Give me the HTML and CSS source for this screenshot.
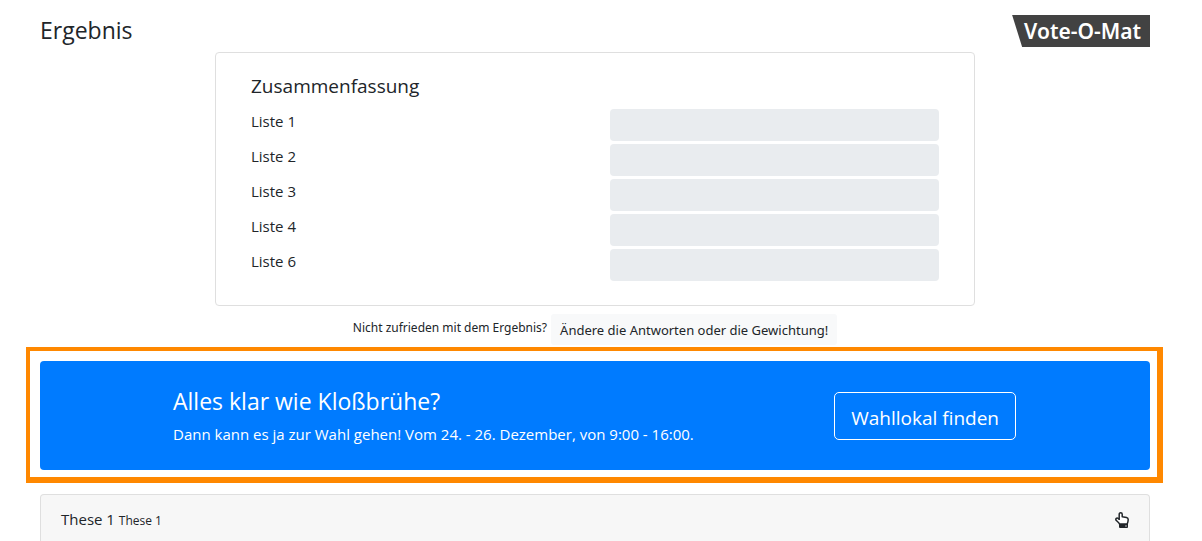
FILE: index.html
```html
<!DOCTYPE html>
<html lang="de">
<head>
<meta charset="utf-8">
<title>Vote-O-Mat – Ergebnis</title>
<meta name="viewport" content="width=device-width, initial-scale=1">
<link rel="stylesheet" href="styles.css">
</head>
<body>
<div class="container">
  <header class="header">
    <h1 class="page-title">Ergebnis</h1>
    <a class="logo" href="#">Vote-O-Mat</a>
  </header>
  <section class="summary">
    <h2 class="summary-title">Zusammenfassung</h2>
    <ul class="lists">
      <li class="row"><span class="name">Liste 1</span><span class="bar"></span></li>
      <li class="row"><span class="name">Liste 2</span><span class="bar"></span></li>
      <li class="row"><span class="name">Liste 3</span><span class="bar"></span></li>
      <li class="row"><span class="name">Liste 4</span><span class="bar"></span></li>
      <li class="row"><span class="name">Liste 6</span><span class="bar"></span></li>
    </ul>
  </section>
  <p class="retry"><small>Nicht zufrieden mit dem Ergebnis?</small><button class="retry-button" type="button">Ändere die Antworten oder die Gewichtung!</button></p>
  <div class="highlight">
    <section class="banner">
      <div class="banner-text">
        <h2 class="banner-title">Alles klar wie Kloßbrühe?</h2>
        <p class="banner-copy">Dann kann es ja zur Wahl gehen! Vom 24. - 26. Dezember, von 9:00 - 16:00.</p>
      </div>
      <a class="banner-button" href="#">Wahllokal finden</a>
    </section>
  </div>
  <section class="thesis">
    <span class="thesis-title">These 1 <small>These 1</small></span>
    <button class="hand" type="button" aria-label="These 1 öffnen">
      <svg viewBox="0 0 14 16" width="14" height="16"><path d="M4.200 8V2.200C4.200.3 7.200.3 7.200 2.200V4.800L11.500 5.500Q13.300 6 13.200 7.800Q13.100 9.800 12.200 12H4.500C4 10.500 2.300 9.600 1.100 8.300C.2 6.800 1.800 5.400 3.200 6.500L4.200 7.500" fill="#fff" stroke="#212529" stroke-width="1.500" stroke-linejoin="round"/><path d="M4 12h9v3q0 1-1 1H5q-1 0-1-1z" fill="#212529"/><circle cx="11" cy="14" r=".7" fill="#f7f7f7"/></svg>
    </button>
  </section>
</div>
</body>
</html>
```
FILE: styles.css
```css
* { box-sizing: border-box; }
body {
  margin: 0;
  padding-right: 12px;
  font-family: "Open Sans", "Noto Sans", sans-serif;
  font-size: 15px;
  line-height: 24px;
  color: #212529;
  background: #fff;
}
h1, h2, p, ul { margin: 0; padding: 0; font-weight: 400; }
.container { max-width: 1140px; margin: 0 auto; padding: 15px 15px 0; }
.header { display: flex; justify-content: space-between; height: 37px; }
.page-title { font-size: 23px; line-height: 31px; }
.logo {
  height: 32px;
  padding: 0 9px 0 12px;
  font: 600 21px/32px "Noto Sans", sans-serif;
  color: #fff;
  text-decoration: none;
  background: #424242;
  clip-path: polygon(0 0, 100% 0, 100% 100%, 10px 100%);
}
.summary {
  max-width: 760px;
  margin: 0 auto;
  padding: 21px 35px 24px;
  border: 1px solid #dfdfdf;
  border-radius: 4px;
}
.summary-title { font-size: 19px; line-height: 24px; margin-bottom: 11px; }
.lists { display: grid; gap: 3px; list-style: none; }
.row { display: grid; grid-template-columns: 1fr 1fr; column-gap: 30px; }
.bar { height: 32px; border-radius: 4px; background: #e9ecef; }
.retry { display: flex; justify-content: center; align-items: flex-start; gap: 4px; margin-top: 8px; }
.retry small { font: 12px/28px "Noto Sans", sans-serif; }
.retry-button {
  padding: 4px 9px 3px;
  border: 0;
  border-radius: 3px;
  font: 13px/24px "Noto Sans", sans-serif;
  color: #212529;
  background: #f8f9fa;
}
.highlight {
  margin: 2px -13px 0 -14px;
  padding: 10px 7px 7px 10px;
  border: solid #ff8800;
  border-width: 4px 6px 6px 4px;
}
.banner {
  display: flex;
  align-items: center;
  padding: 24px 134px 24px 133px;
  border-radius: 4px;
  color: #fff;
  background: #007bff;
}
.banner-text { flex: 1; }
.banner-title { margin-bottom: 5px; font-size: 23px; line-height: 32px; }
.banner-copy { line-height: 24px; }
.banner-button {
  padding: 10px 16px 6px;
  border: 1px solid #fff;
  border-radius: 5px;
  font-size: 19px;
  line-height: 30px;
  color: #fff;
  text-decoration: none;
}
.thesis {
  display: flex;
  justify-content: space-between;
  align-items: center;
  margin-top: 11px;
  padding: 12px 20px;
  border: 1px solid #dfdfdf;
  border-bottom: 0;
  border-radius: 4px 4px 0 0;
  background: #f7f7f7;
}
.thesis small { font-size: 12px; }
.hand { display: flex; padding: 0; border: 0; background: none; }
```
